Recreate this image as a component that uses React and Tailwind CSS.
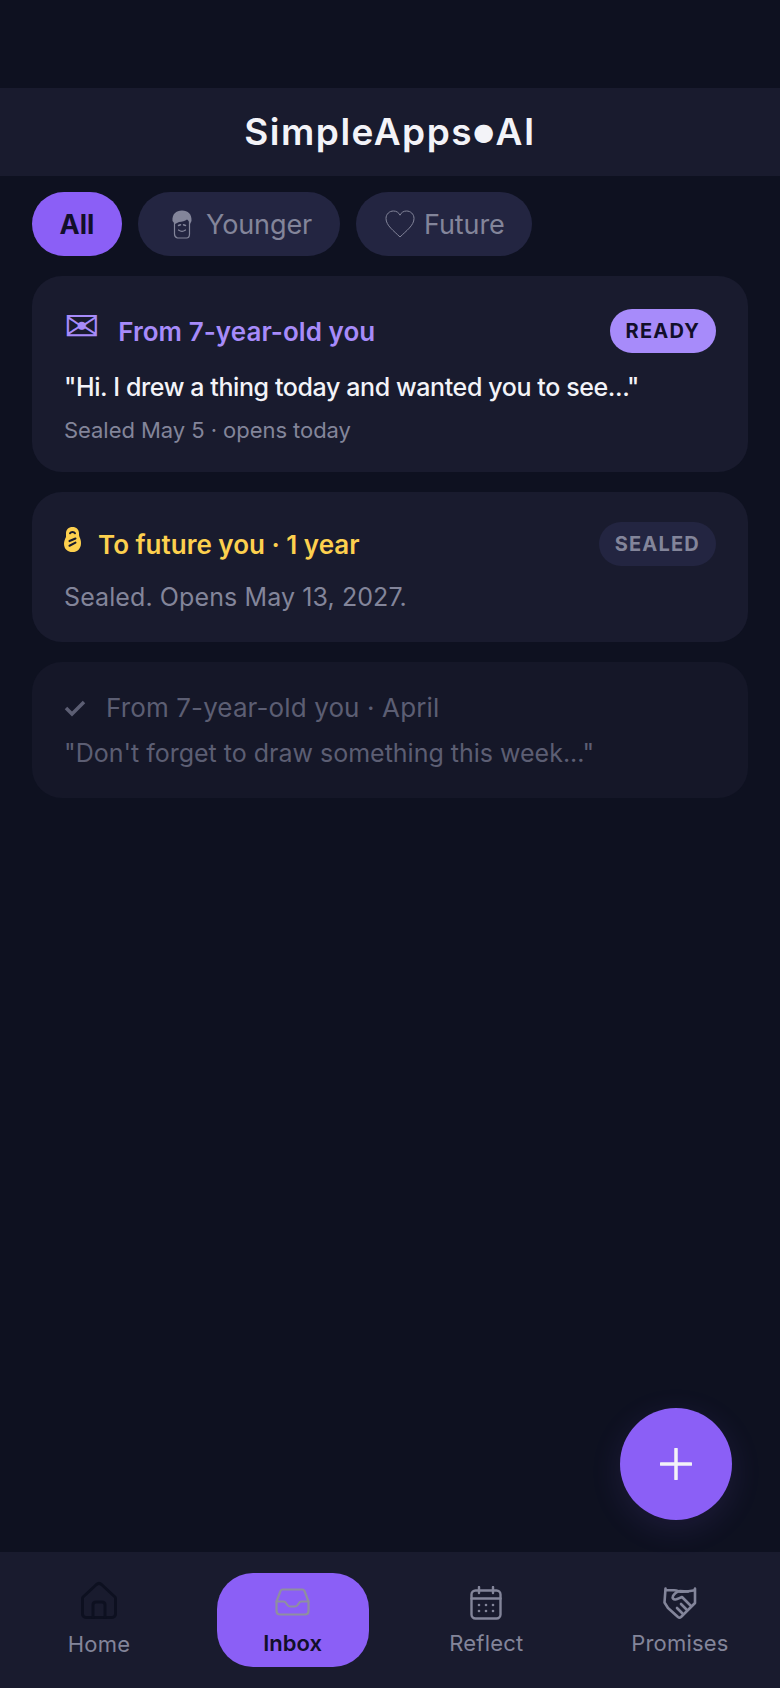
function FaceIcon() {
  return (
    <svg width="20" height="29" viewBox="0 0 20 29" fill="none">
      <path d="M2.500 10v14c0 2.500 1 3.500 3 4h9c2 0 3-1.500 3-4V10" stroke="#83859a" strokeWidth="1.200" />
      <path d="M0.500 11C0 4 4 0.500 10 0.500S20 4 19.500 11l-1.500 3c-.5-2-1.500-3.500-3-4.500-2 1.500-5 2.500-8 2.500l-4 2z" fill="#83859a" />
      <path d="M6.500 15.500l2-.8M13.500 15.500l-2-.8" stroke="#83859a" strokeWidth="1.500" strokeLinecap="round" />
      <path d="M6.500 20c2 1.500 5 1.500 7 0" stroke="#83859a" strokeWidth="1.200" strokeLinecap="round" />
    </svg>
  )
}

function HeartIcon() {
  return (
    <svg width="30" height="28" viewBox="0 0 30 28" fill="none">
      <path d="M15 27C9 21 1 15.500 1 8.500 1 4 4.500 1 8.500 1c3 0 5.200 1.500 6.500 4.200C16.300 2.500 18.500 1 21.500 1 25.500 1 29 4 29 8.500 29 15.500 21 21 15 27z" stroke="#83859a" strokeWidth="1" />
    </svg>
  )
}

function LockBlob() {
  return (
    <svg width="17" height="25" viewBox="0 0 17 24" preserveAspectRatio="none">
      <path d="M8.500 0C12.500 0 15 2.500 15 6c0 1.500 0 2.500.5 3.500 1 2 1.500 3.500 1.500 6 0 5-3.500 8.500-8.500 8.500S0 21 0 16c0-2.500 1-4.500 2-6.500C2 8.500 2 7.500 2 6c0-3.500 2.500-6 6.500-6z" fill="#fdd04e" />
      <path d="M6 6c1-1.500 4-1.500 5 0M5.500 13.500l6-2.500M5.500 18l6-3" stroke="#181a2e" strokeWidth="2" strokeLinecap="round" fill="none" />
    </svg>
  )
}

function HomeIcon() {
  return (
    <svg width="36" height="38" viewBox="0 0 36 38" fill="none" stroke="#0d1020" strokeWidth="3" strokeLinejoin="round" strokeLinecap="round">
      <path d="M2 16L15.500 3.500c1.500-1.300 3.500-1.300 5 0L34 16c.5.500.5 1 .5 2v15c0 2-1.500 3.500-3.500 3.500H5c-2 0-3.500-1.500-3.500-3.500V18c0-1 0-1.500.5-2z" />
      <path d="M12 36V24c0-2 1-3 3-3h6c2 0 3 1 3 3v12" />
    </svg>
  )
}

function InboxIcon() {
  return (
    <svg width="35" height="28" viewBox="0 0 35 28" fill="none" stroke="#8f8f9f" strokeWidth="2.200" strokeLinejoin="round" strokeLinecap="round">
      <path d="M7.500 1.500h20c1 0 1.500.5 2 1.500l4 10.500V23c0 2-1.500 3.500-3.500 3.500H5c-2 0-3.500-1.500-3.500-3.500v-9.500L5.500 3c.5-1 1-1.500 2-1.500z" />
      <path d="M1.500 13.500h7c1 0 2 .5 2.500 1.500l1 1.500c1 1.500 2 2 3 2h5c1 0 2-.5 3-2l1-1.500c.5-1 1.500-1.500 2.500-1.500h7" />
    </svg>
  )
}

function CalendarIcon() {
  return (
    <svg width="32" height="34" viewBox="0 0 32 34" fill="none" stroke="#83859a" strokeWidth="2.400" strokeLinecap="round">
      <rect x="1.500" y="4.500" width="29" height="28" rx="4" />
      <path d="M9 1v6M23 1v6M1.500 12.500h29" />
      <g fill="#83859a" stroke="none">
        <circle cx="9" cy="19" r="1.300" /><circle cx="16" cy="19" r="1.300" /><circle cx="23" cy="19" r="1.300" />
        <circle cx="9" cy="25" r="1.300" /><circle cx="16" cy="25" r="1.300" /><circle cx="23" cy="25" r="1.300" />
      </g>
    </svg>
  )
}

function HandshakeShield() {
  return (
    <svg width="34" height="32" viewBox="0 0 34 32" fill="none" stroke="#83859a" strokeWidth="2.600" strokeLinejoin="round" strokeLinecap="round">
      <path d="M2.500 1.500v1.800h8.500c2 0 4 .7 5.500 1.200 4 1 9-.2 15-1.200l.5-1.800v14.500L28 20 18 30c-1 .8-2 .8-3 0L5 21 1.500 15.500z" />
      <path d="M25 4.500l-8-.5c-3 .5-5.500 2.500-7 5-1 2 .5 3.800 2.500 3.500 2.500-.4 4.200-1.800 6.500-2.500L28 19" />
      <path d="M23.500 22.500L18 17M19.500 26.500L14 21" />
    </svg>
  )
}

function NavItem({ icon, label, gap = 'gap-[13px]', top = 'pt-[14px]' }) {
  return (
    <div className={`w-[152px] h-[94px] flex flex-col items-center ${gap} ${top} text-[#83859a]`}>
      <div className="h-[34px] flex items-center justify-center">{icon}</div>
      <span className="text-[22px] leading-[26px] tracking-[0.200px]">{label}</span>
    </div>
  )
}

export default function App() {
  return (
    <div className="relative w-[780px] h-[1688px] flex flex-col bg-[#0e1120] font-['Inter',sans-serif] overflow-hidden">
      <div className="h-[88px]" />
      <header className="h-[88px] bg-[#191b2e] flex items-center justify-center">
        <h1 className="text-[37px] font-semibold tracking-[1.500px] text-[#f3f3f8] flex items-center">
          SimpleApps
          <span className="text-[24px] leading-none font-['DejaVu_Sans',sans-serif]">●</span>
          AI
        </h1>
      </header>

      <div className="flex gap-4 px-8 pt-4">
        <button className="h-16 w-[90px] rounded-[32px] bg-[#8b5ff6] text-[#120f2a] text-[27px] font-bold pt-[2px]">All</button>
        <button className="h-16 w-[202px] rounded-[32px] bg-[#232541] text-[#83859a] text-[27px] flex items-center pl-[34px] gap-[14px]">
          <FaceIcon />
          <span className="mt-[2px] tracking-[-0.100px]">Younger</span>
        </button>
        <button className="h-16 w-[176px] rounded-[32px] bg-[#232541] text-[#83859a] text-[27px] flex items-center pl-[29px] gap-[9px]">
          <HeartIcon />
          <span className="mt-[2px] tracking-[-0.100px]">Future</span>
        </button>
      </div>

      <main className="flex-1 flex flex-col gap-5 px-8 pt-5">
        <section className="h-[196px] rounded-[30px] bg-[#191b2e] px-8 pt-[33px]">
          <div className="flex items-center justify-between h-11">
            <div className="flex items-center gap-[19px]">
              <span className="font-['DejaVu_Sans',sans-serif] text-[#a78bfa] text-[42px] leading-none -mt-2">✉</span>
              <span className="text-[#a78bfa] text-[26px] font-semibold tracking-[0.050px] mt-[1px]">From 7-year-old you</span>
            </div>
            <span className="h-11 px-4 rounded-[22px] bg-[#a78bfa] text-[#120f2a] text-[20px] font-bold tracking-[1.200px] flex items-center">READY</span>
          </div>
          <p className="mt-[18px] text-[#f3f3f8] text-[25px] font-medium leading-[32px] tracking-[-0.400px]">"Hi. I drew a thing today and wanted you to see..."</p>
          <p className="mt-[12px] text-[#83859a] text-[22px] tracking-[-0.050px] leading-[30px]">Sealed May 5 · opens today</p>
        </section>

        <section className="h-[150px] rounded-[30px] bg-[#191b2e] px-8 pt-[30px]">
          <div className="flex items-center justify-between h-11">
            <div className="flex items-center gap-[17px]">
              <span className="-mt-[9px]"><LockBlob /></span>
              <span className="text-[#fdd04e] text-[26px] font-semibold">To future you · 1 year</span>
            </div>
            <span className="h-11 px-4 rounded-[22px] bg-[#232541] text-[#83859a] text-[20px] font-bold tracking-[1.200px] flex items-center">SEALED</span>
          </div>
          <p className="mt-[14px] text-[#83859a] text-[25px] tracking-[0.100px] leading-[34px]">Sealed. Opens May 13, 2027.</p>
        </section>

        <section className="h-[136px] rounded-[30px] bg-[#151728] px-8 pt-[27px]">
          <div className="flex items-center gap-[20px] text-[#5c5e73]">
            <span className="w-[22px] flex justify-center">
              <svg width="22" height="18" viewBox="0 0 22 18" fill="none"><path d="M2 9l6 6L20 3" stroke="#5c5e73" strokeWidth="3.500" /></svg>
            </span>
            <span className="text-[26px] tracking-[0.120px] leading-[38px]">From 7-year-old you · April</span>
          </div>
          <p className="mt-2 text-[#5c5e73] text-[25px] leading-[36px]">"Don't forget to draw something this week..."</p>
        </section>
      </main>

      <button className="absolute left-[620px] top-[1408px] w-[112px] h-[112px] rounded-full bg-[#8b5ff6] shadow-[0_8px_32px_rgba(139,95,246,0.12)] flex items-center justify-center">
        <svg width="32" height="32" viewBox="0 0 32 32" fill="none"><path d="M16 1v30M1 16h30" stroke="#f3f3f8" strokeWidth="3.500" strokeLinecap="round" /></svg>
      </button>

      <nav className="h-[136px] bg-[#191b2e] flex items-start justify-between pl-[23px] pr-[24px] pt-[21px]">
        <NavItem icon={<HomeIcon />} label="Home" top="pt-[10px]" gap="gap-[14px]" />
        <div className="w-[152px] h-[94px] rounded-[36px] bg-[#8b5ff6] flex flex-col items-center pt-[14px] gap-[11px]">
          <div className="h-[34px] flex items-center justify-center -mt-[2px]"><InboxIcon /></div>
          <span className="text-[22px] leading-[26px] font-semibold text-[#120f2a]">Inbox</span>
        </div>
        <NavItem icon={<CalendarIcon />} label="Reflect" top="pt-[13px]" gap="gap-[10px]" />
        <NavItem icon={<HandshakeShield />} label="Promises" top="pt-[13px]" gap="gap-[10px]" />
      </nav>
    </div>
  )
}
